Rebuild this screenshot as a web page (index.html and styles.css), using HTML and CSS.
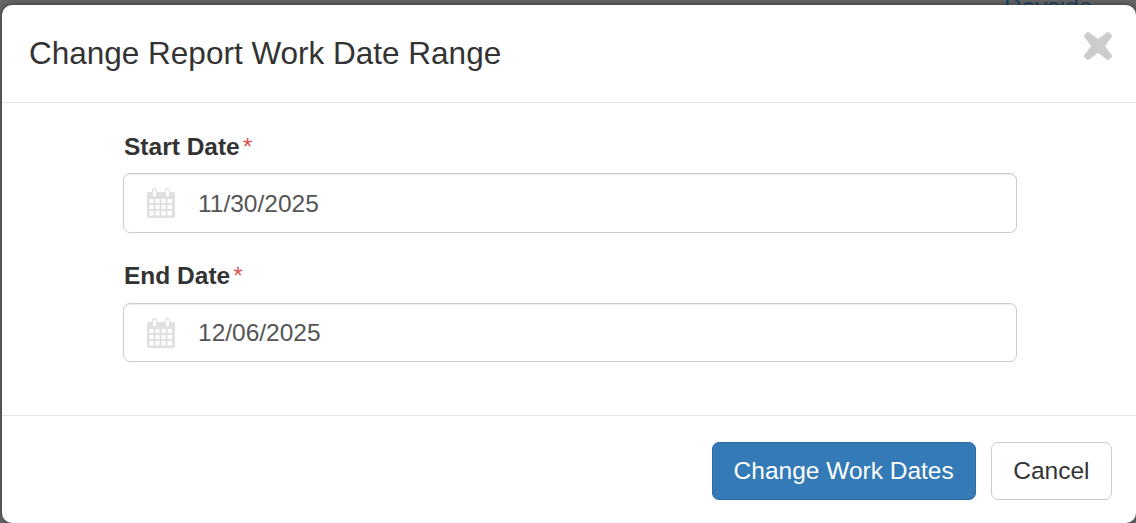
FILE: index.html
```html
<!DOCTYPE html>
<html lang="en">
<head>
<meta charset="utf-8">
<title>Change Report Work Date Range</title>
<link rel="stylesheet" href="styles.css">
</head>
<body>
<a class="behind-link" href="#">Dayside</a>
<div class="modal">
  <header class="modal-header">
    <h4 class="modal-title">Change Report Work Date Range</h4>
    <svg class="close" viewBox="0 0 28 28" aria-label="Close"><path d="M4 1.500 14 9 24 1.500 26.500 4 19 14 26.500 24 24 26.500 14 19 4 26.500 1.500 24 9 14 1.500 4Z" fill="#cdcdcd" stroke="#cdcdcd" stroke-width="3" stroke-linejoin="round"/></svg>
  </header>
  <div class="modal-body">
    <div class="field">
      <label class="field-label">Start Date<span class="req">*</span></label>
      <div class="date-input">
        <svg class="cal" viewBox="0 0 28 30"><path fill="#e0e0e0" fill-rule="evenodd" d="M2 4H5V2.500A2.500 2.500 0 0 1 10 2.500V4H18V2.500A2.500 2.500 0 0 1 23 2.500V4H26A2 2 0 0 1 28 6V28A2 2 0 0 1 26 30H2A2 2 0 0 1 0 28V6A2 2 0 0 1 2 4ZM6 3V7A1.500 1.500 0 0 0 9 7V3A1.500 1.500 0 0 0 6 3ZM19 3V7A1.500 1.500 0 0 0 22 7V3A1.500 1.500 0 0 0 19 3ZM2.500 11V15H6.500V11ZM8.500 11V15H12.500V11ZM14.500 11V15H18.500V11ZM20.500 11V15H25V11ZM2.500 17V21H6.500V17ZM8.500 17V21H12.500V17ZM14.500 17V21H18.500V17ZM20.500 17V21H25V17ZM2.500 23V27.500H6.500V23ZM8.500 23V27.500H12.500V23ZM14.500 23V27.500H18.500V23ZM20.500 23V27.500H25V23Z"/></svg>
        <span class="date-value">11/30/2025</span>
      </div>
    </div>
    <div class="field">
      <label class="field-label">End Date<span class="req">*</span></label>
      <div class="date-input">
        <svg class="cal" viewBox="0 0 28 30"><path fill="#e0e0e0" fill-rule="evenodd" d="M2 4H5V2.500A2.500 2.500 0 0 1 10 2.500V4H18V2.500A2.500 2.500 0 0 1 23 2.500V4H26A2 2 0 0 1 28 6V28A2 2 0 0 1 26 30H2A2 2 0 0 1 0 28V6A2 2 0 0 1 2 4ZM6 3V7A1.500 1.500 0 0 0 9 7V3A1.500 1.500 0 0 0 6 3ZM19 3V7A1.500 1.500 0 0 0 22 7V3A1.500 1.500 0 0 0 19 3ZM2.500 11V15H6.500V11ZM8.500 11V15H12.500V11ZM14.500 11V15H18.500V11ZM20.500 11V15H25V11ZM2.500 17V21H6.500V17ZM8.500 17V21H12.500V17ZM14.500 17V21H18.500V17ZM20.500 17V21H25V17ZM2.500 23V27.500H6.500V23ZM8.500 23V27.500H12.500V23ZM14.500 23V27.500H18.500V23ZM20.500 23V27.500H25V23Z"/></svg>
        <span class="date-value">12/06/2025</span>
      </div>
    </div>
  </div>
  <footer class="modal-footer">
    <button class="btn btn-primary">Change Work Dates</button>
    <button class="btn btn-default">Cancel</button>
  </footer>
</div>
</body>
</html>
```
FILE: styles.css
```css
* { box-sizing: border-box; }
html, body { margin: 0; height: 100%; overflow: hidden; }
body {
  background: #666;
  font-family: "Liberation Sans", Arial, sans-serif;
  color: #333;
  padding: 5px 0 0 2px;
}
.behind-link {
  position: absolute;
  top: -7px;
  left: 1004px;
  font-size: 24.500px;
  line-height: 28px;
  color: #1c4666;
  text-decoration: none;
}
.modal {
  position: relative;
  width: 1134px;
  height: 518px;
  background: #fff;
  border-radius: 10px;
  box-shadow: 0 0 6px rgba(0, 0, 0, .5);
  display: flex;
  flex-direction: column;
}
.modal-header {
  height: 98px;
  flex: none;
  padding: 0 27px;
  border-bottom: 1px solid #e5e5e5;
  display: flex;
  align-items: center;
  justify-content: space-between;
}
.modal-title { margin: 0; font-size: 31.500px; font-weight: 400; line-height: 1; }
.close { width: 28px; height: 28px; margin: -15px -3px 0 0; }
.modal-body {
  height: 312px;
  flex: none;
  padding: 29px 119px 0 121px;
  display: flex;
  flex-direction: column;
  gap: 28px;
}
.field-label {
  display: block;
  font-size: 24.500px;
  font-weight: 700;
  line-height: 30px;
  margin-bottom: 11px;
  padding-left: 1px;
}
.field + .field .field-label { margin-bottom: 12px; }
.req { color: #d9534f; margin-left: 3px; font-weight: 400; }
.date-input {
  height: 60px;
  border: 1px solid #ccc;
  border-radius: 7px;
  display: flex;
  align-items: center;
  padding: 1px 0 0 23px;
  box-shadow: inset 0 1px 1px rgba(0, 0, 0, .075);
}
.field + .field .date-input { height: 59px; }
.cal { width: 28px; height: 30px; flex: none; margin-top: -1px; }
.date-value { margin-left: 23px; font-size: 24.500px; color: #555; }
.modal-footer {
  flex: 1;
  border-top: 1px solid #e5e5e5;
  display: flex;
  justify-content: flex-end;
  gap: 15px;
  padding: 26px 24px 0 0;
}
.btn {
  height: 58px;
  font: 400 24.500px "Liberation Sans", Arial, sans-serif;
  padding: 0 21px;
  border-radius: 7px;
  border: 1px solid;
}
.btn-primary { background: #337ab7; border-color: #2e6da4; color: #fff; }
.btn-default { background: #fff; border-color: #ccc; color: #333; padding: 0 21.500px; }
```
